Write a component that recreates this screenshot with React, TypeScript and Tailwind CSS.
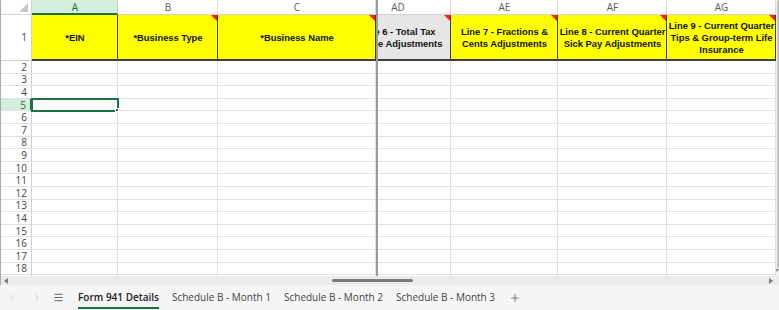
import { ChevronLeft, ChevronRight, Menu, Plus } from 'lucide-react';
import clsx from 'clsx';

type Col = { key: string; w: number; full?: number; label: string[]; red: boolean; gray?: boolean };

const LEFT: Col[] = [
  { key: 'A', w: 86, label: ['*EIN'], red: false },
  { key: 'B', w: 100, label: ['*Business Type'], red: true },
  { key: 'C', w: 158, label: ['*Business Name'], red: true },
];

const RIGHT: Col[] = [
  { key: 'AD', w: 73, full: 106, label: ['Line 6 - Total Tax', 'Before Adjustments'], red: true, gray: true },
  { key: 'AE', w: 107, label: ['Line 7 - Fractions &', 'Cents Adjustments'], red: true },
  { key: 'AF', w: 109, label: ['Line 8 - Current Quarter', 'Sick Pay Adjustments'], red: true },
  { key: 'AG', w: 109, label: ['Line 9 - Current Quarter', 'Tips & Group-term Life', 'Insurance'], red: true },
];

const ROWS = Array.from({ length: 18 }, (_, i) => i + 2);
const TABS = ['Form 941 Details', 'Schedule B - Month 1', 'Schedule B - Month 2', 'Schedule B - Month 3'];

// a column that may be partly scrolled under the frozen pane
function Clip({ col, children, className }: { col: Col; children: React.ReactNode; className?: string }) {
  return (
    <div className={clsx('relative shrink-0 overflow-hidden h-full', className)} style={{ width: col.w }}>
      <div className="h-full flex" style={{ width: col.full ?? col.w, marginLeft: col.full ? col.w - col.full : 0 }}>
        {children}
      </div>
    </div>
  );
}

function Freeze() {
  return <div className="w-[2px] shrink-0 h-full bg-[#9c9c9c]" />;
}

function HeaderCell({ col }: { col: Col }) {
  const sel = col.key === 'A';
  return (
    <Clip
      col={col}
      className={clsx(
        'border-r',
        sel ? 'bg-[#d3eedd] border-r-[#c9c9c9] border-b-2 border-b-[#1e7145]' : 'bg-white border-r-[#dadada] border-b border-b-[#d0d0d0]',
      )}
    >
      <div className={clsx('flex-1 flex items-center justify-center text-[10px] leading-none', sel ? 'text-[#1e6b3c]' : 'text-[#5c5c5c]')}>
        {col.key}
      </div>
    </Clip>
  );
}

function TitleCell({ col }: { col: Col }) {
  return (
    <Clip col={col} className={clsx('border-r border-r-[#3d3d3d] border-b-2 border-b-[#3d3d3d]', col.gray ? 'bg-[#e6e6e6]' : 'bg-[#ffff00]')}>
      <div className="flex-1 flex flex-col items-center justify-center pt-[1px] font-['Liberation_Sans',Arial,sans-serif] font-bold text-[9.4px] leading-[12px] text-[#111] whitespace-nowrap">
        {col.label.map(l => <span key={l}>{l}</span>)}
      </div>
      {col.red && (
        <div className="absolute top-0 right-0 w-0 h-0 border-l-[6px] border-l-transparent border-t-[6px] border-t-[#ff1a1a]" />
      )}
    </Clip>
  );
}

function GridCell({ col, selected }: { col: Col; selected?: boolean }) {
  return (
    <div
      className={clsx('relative shrink-0 h-full bg-white border-r border-b border-[#e1e1e1]', selected && 'outline-2 outline-[#1e7145] -outline-offset-1 z-10')}
      style={{ width: col.w }}
    >
      {selected && <div className="absolute -right-[2px] -bottom-[2px] w-[4px] h-[4px] bg-[#1e7145] border border-white" />}
    </div>
  );
}

export default function App() {
  return (
    <div className="w-[779px] h-[310px] overflow-hidden bg-white font-['Open_Sans','Noto_Sans',sans-serif] select-none">
      <div className="flex h-[276px] border-l border-[#a8a8a8]">
        <div className="flex-1 flex flex-col overflow-hidden">
          {/* column letters */}
          <div className="flex h-[15px] shrink-0">
            <div className="relative w-[31px] shrink-0 bg-white border-r border-b border-[#d0d0d0]">
              <div className="absolute right-[3px] bottom-[2px] w-0 h-0 border-l-[9px] border-l-transparent border-b-[9px] border-b-[#c7c7c7]" />
            </div>
            {LEFT.map(c => <HeaderCell key={c.key} col={c} />)}
            <Freeze />
            {RIGHT.map(c => <HeaderCell key={c.key} col={c} />)}
          </div>

          {/* row 1: titles */}
          <div className="flex h-[46px] shrink-0">
            <div className="w-[31px] shrink-0 bg-white border-r border-b border-[#d0d0d0] flex items-center justify-end pr-[4px] text-[10px] text-[#444]">1</div>
            {LEFT.map(c => <TitleCell key={c.key} col={c} />)}
            <Freeze />
            {RIGHT.map(c => <TitleCell key={c.key} col={c} />)}
          </div>

          {ROWS.map(r => (
            <div key={r} className="flex h-[12.6px] shrink-0">
              <div
                className={clsx(
                  'w-[31px] shrink-0 border-b border-[#e1e1e1] flex items-center justify-end pr-[4px] text-[10px] leading-none',
                  r === 5 ? 'bg-[#d3eedd] text-[#1e6b3c] border-r-2 border-r-[#1e7145]' : 'bg-white text-[#444] border-r border-r-[#d0d0d0]',
                )}
              >
                {r < 19 ? r : ''}
              </div>
              {LEFT.map(c => <GridCell key={c.key} col={c} selected={r === 5 && c.key === 'A'} />)}
              <Freeze />
              {RIGHT.map(c => <GridCell key={c.key} col={c} />)}
            </div>
          ))}
        </div>

        {/* vertical scrollbar */}
        <div className="w-[3px] shrink-0 bg-[#f3f3f3] flex flex-col items-end">
          <div className="w-[2px] h-[268px] bg-[#c4c4c4] rounded-sm" />
          <div className="mt-[1px] w-0 h-0 border-l-[2px] border-r-[2px] border-l-transparent border-r-transparent border-t-[3px] border-t-[#8a8a8a]" />
        </div>
      </div>

      {/* horizontal scrollbar */}
      <div className="h-[9px] bg-[#ebebeb] border-l border-[#a8a8a8] flex items-center relative">
        <div className="ml-[3px] w-0 h-0 border-t-[3px] border-b-[3px] border-t-transparent border-b-transparent border-r-[4px] border-r-[#7b7b7b]" />
        <div className="ml-[324px] w-[81px] h-[3px] rounded-full bg-[#7d7d7d]" />
        <div className="ml-auto mr-[6px] w-0 h-0 border-t-[3px] border-b-[3px] border-t-transparent border-b-transparent border-l-[4px] border-l-[#7b7b7b]" />
      </div>

      {/* sheet tabs */}
      <div className="h-[25px] bg-[#f5f5f5] flex items-stretch text-[10px] text-[#444]">
        <div className="flex items-center pl-[7px] gap-[13px] text-[#c0c0c0]">
          <ChevronLeft size={11} strokeWidth={1.5} />
          <ChevronRight size={11} strokeWidth={1.5} />
        </div>
        <div className="flex items-center ml-[11px] text-[#444]">
          <Menu size={11} strokeWidth={1.8} />
        </div>
        <div className="flex items-stretch ml-[14px] gap-[13px]">
          {TABS.map((t, i) => (
            <div key={t} className="relative flex items-center">
              <span className={clsx(i === 0 ? 'font-semibold text-[#222]' : 'text-[#444]')}>{t}</span>
              {i === 0 && <div className="absolute left-0 right-0 bottom-[1px] h-[2px] bg-[#1e7145]" />}
            </div>
          ))}
          <div className="flex items-center ml-[1px] text-[#555]">
            <Plus size={12} strokeWidth={1.5} />
          </div>
        </div>
      </div>
    </div>
  );
}
